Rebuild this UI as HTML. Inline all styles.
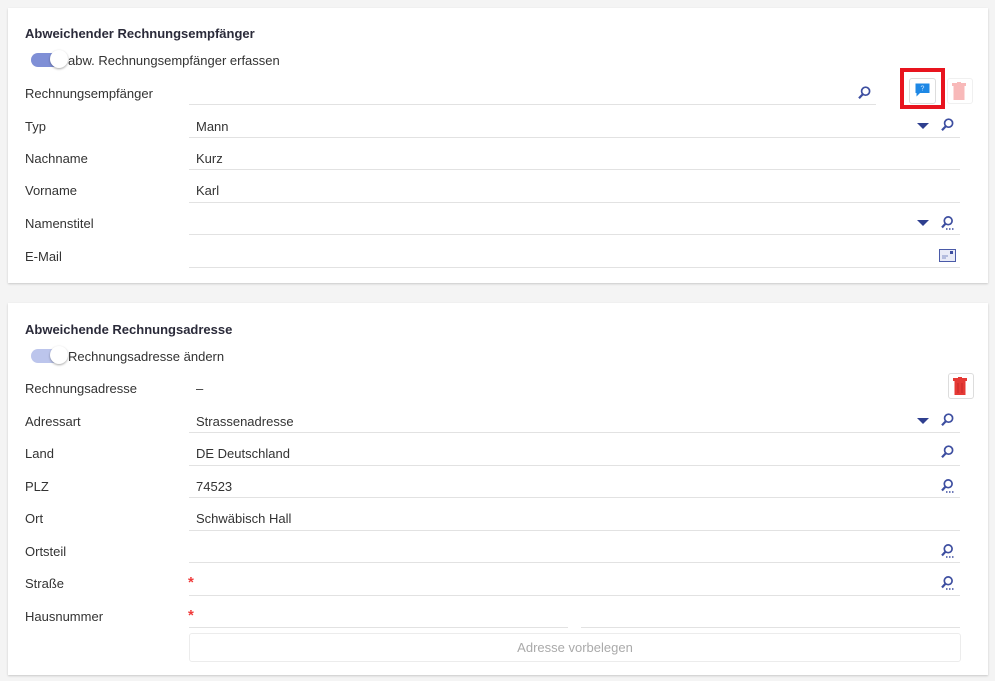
<!DOCTYPE html>
<html><head><meta charset="utf-8"><style>
body{margin:0;width:995px;height:681px;background:#f4f4f4;font-family:"Liberation Sans",sans-serif;font-size:13px;color:#333;position:relative;overflow:hidden}
.card{position:absolute;left:8px;width:980px;background:#fff;box-shadow:0 1px 2px rgba(0,0,0,.18)}
.a{position:absolute;white-space:nowrap}
.t{font-weight:bold;color:#2b2b3a}
.ln{position:absolute;height:1px;background:#e2e2e2}
.tg{position:absolute;width:34px;height:14px;border-radius:7px}
.tg i{position:absolute;right:-3px;top:-3px;width:18px;height:18px;border-radius:50%;background:#fff;box-shadow:0 1px 2px rgba(0,0,0,.35)}
.ic{position:absolute}
.req{position:absolute;color:#f03a3a;font-weight:bold;font-size:15px}
</style></head><body>
<svg width="0" height="0" style="position:absolute"><defs>
<symbol id="s" viewBox="0 0 14 14"><circle cx="8.6" cy="5.2" r="4" fill="none" stroke="#3d4ea0" stroke-width="1.7"/><path d="M5.8 8.2L2 12.2" stroke="#3d4ea0" stroke-width="2.2"/></symbol>
<symbol id="s2" viewBox="0 0 14 14"><circle cx="8.2" cy="4.8" r="3.9" fill="none" stroke="#3d4ea0" stroke-width="1.7"/><path d="M5.4 7.8L2 11.5" stroke="#3d4ea0" stroke-width="2.2"/><path d="M6 13h1.5M9 13h1.5M12 13h1.5" stroke="#3d4ea0" stroke-width="1.4"/></symbol>
<symbol id="d" viewBox="0 0 12 6"><path d="M0 0h12L6 6z" fill="#2e3f8f"/></symbol>
</defs></svg>

<div class="card" style="top:8px;height:275px"></div>
<div class="a t" style="left:25px;top:26px">Abweichender Rechnungsempfänger</div>
<div class="tg" style="left:31px;top:53px;background:#7f8fd6"><i></i></div>
<div class="a" style="left:68px;top:53px">abw. Rechnungsempfänger erfassen</div>

<div class="a" style="left:25px;top:86px">Rechnungsempfänger</div>
<div class="ln" style="left:189px;width:687px;top:104px"></div>
<svg class="ic" style="left:857px;top:86px" width="14" height="14"><use href="#s"/></svg>
<div class="a" style="left:909px;top:78px;width:25px;height:24px;border:1px solid #ddd;border-radius:3px;background:#fff"></div>
<svg class="ic" style="left:915px;top:83px" width="15" height="14" viewBox="0 0 15 14"><path d="M0.5 0.5h14v9.5H5l-3.5 3.5V10H0.5z" fill="#1e88e5"/><text x="7.5" y="7.5" font-size="7" fill="#cfe6ff" text-anchor="middle" font-family="Liberation Sans">?</text></svg>
<div class="a" style="left:900px;top:68px;width:37px;height:33px;border:4px solid #e8141e"></div>
<div class="a" style="left:947px;top:78px;width:24px;height:24px;border:1px solid #f0f0f0;border-radius:3px"></div>
<svg class="ic" style="left:952px;top:82px" width="14" height="18" viewBox="0 0 14 18"><rect x="0" y="1" width="14" height="3" fill="#f8b9b9"/><rect x="5" y="0" width="4" height="2" fill="#f8b9b9"/><rect x="1.5" y="4" width="11" height="14" fill="#f8b9b9"/></svg>

<div class="a" style="left:25px;top:119px">Typ</div><div class="a" style="left:196px;top:119px">Mann</div>
<div class="ln" style="left:189px;width:771px;top:137px"></div>
<svg class="ic" style="left:917px;top:123px" width="12" height="6"><use href="#d"/></svg>
<svg class="ic" style="left:940px;top:118px" width="14" height="14"><use href="#s"/></svg>
<div class="a" style="left:25px;top:151px">Nachname</div><div class="a" style="left:196px;top:151px">Kurz</div>
<div class="ln" style="left:189px;width:771px;top:169px"></div>
<div class="a" style="left:25px;top:183px">Vorname</div><div class="a" style="left:196px;top:183px">Karl</div>
<div class="ln" style="left:189px;width:771px;top:202px"></div>
<div class="a" style="left:25px;top:216px">Namenstitel</div>
<div class="ln" style="left:189px;width:771px;top:234px"></div>
<svg class="ic" style="left:917px;top:220px" width="12" height="6"><use href="#d"/></svg>
<svg class="ic" style="left:940px;top:216px" width="14" height="14"><use href="#s2"/></svg>
<div class="a" style="left:25px;top:249px">E-Mail</div>
<div class="ln" style="left:189px;width:771px;top:267px"></div>
<svg class="ic" style="left:939px;top:249px" width="17" height="13" viewBox="0 0 17 13"><rect x="0.5" y="0.5" width="16" height="12" fill="#e8ebf7" stroke="#4a5aa8"/><rect x="11" y="2" width="3" height="3" fill="#3d4ea0"/><path d="M3 7h6M3 9h4" stroke="#7f8fc6"/></svg>

<div class="card" style="top:303px;height:372px"></div>
<div class="a t" style="left:25px;top:322px">Abweichende Rechnungsadresse</div>
<div class="tg" style="left:31px;top:349px;background:#bcc5ec"><i></i></div>
<div class="a" style="left:68px;top:349px">Rechnungsadresse ändern</div>
<div class="a" style="left:25px;top:381px">Rechnungsadresse</div><div class="a" style="left:196px;top:381px">–</div>
<div class="a" style="left:948px;top:373px;width:24px;height:24px;border:1px solid #ddd;border-radius:3px"></div>
<svg class="ic" style="left:953px;top:377px" width="14" height="18" viewBox="0 0 14 18"><rect x="0" y="1" width="14" height="3" fill="#e53935"/><rect x="5" y="0" width="4" height="2" fill="#e53935"/><rect x="1.5" y="4" width="11" height="14" fill="#e53935"/><path d="M5 6v10M9 6v10" stroke="#c62828"/></svg>

<div class="a" style="left:25px;top:414px">Adressart</div><div class="a" style="left:196px;top:414px">Strassenadresse</div>
<div class="ln" style="left:189px;width:771px;top:432px"></div>
<svg class="ic" style="left:917px;top:418px" width="12" height="6"><use href="#d"/></svg>
<svg class="ic" style="left:940px;top:413px" width="14" height="14"><use href="#s"/></svg>
<div class="a" style="left:25px;top:446px">Land</div><div class="a" style="left:196px;top:446px">DE Deutschland</div>
<div class="ln" style="left:189px;width:771px;top:465px"></div>
<svg class="ic" style="left:940px;top:445px" width="14" height="14"><use href="#s"/></svg>
<div class="a" style="left:25px;top:479px">PLZ</div><div class="a" style="left:196px;top:479px">74523</div>
<div class="ln" style="left:189px;width:771px;top:497px"></div>
<svg class="ic" style="left:940px;top:479px" width="14" height="14"><use href="#s2"/></svg>
<div class="a" style="left:25px;top:511px">Ort</div><div class="a" style="left:196px;top:511px">Schwäbisch Hall</div>
<div class="ln" style="left:189px;width:771px;top:530px"></div>
<div class="a" style="left:25px;top:544px">Ortsteil</div>
<div class="ln" style="left:189px;width:771px;top:562px"></div>
<svg class="ic" style="left:940px;top:544px" width="14" height="14"><use href="#s2"/></svg>
<div class="a" style="left:25px;top:576px">Straße</div><div class="req" style="left:188px;top:574px">*</div>
<div class="ln" style="left:189px;width:771px;top:595px"></div>
<svg class="ic" style="left:940px;top:576px" width="14" height="14"><use href="#s2"/></svg>
<div class="a" style="left:25px;top:609px">Hausnummer</div><div class="req" style="left:188px;top:607px">*</div>
<div class="ln" style="left:189px;width:379px;top:627px"></div>
<div class="ln" style="left:581px;width:379px;top:627px"></div>
<div class="a" style="left:189px;top:633px;width:770px;height:27px;border:1px solid #ececec;border-radius:3px;text-align:center;line-height:27px;color:#aaa">Adresse vorbelegen</div>
</body></html>
